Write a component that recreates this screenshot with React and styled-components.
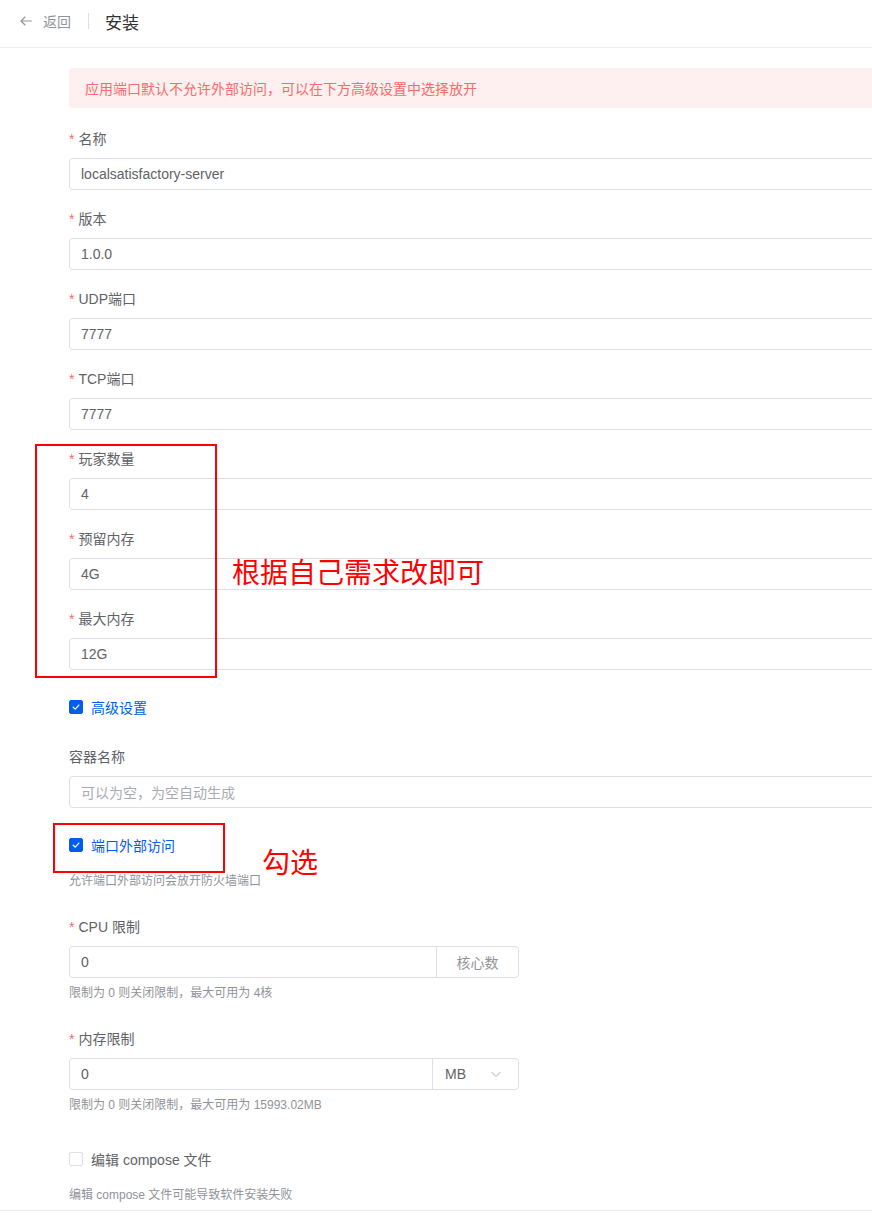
import React from "react";
import styled, { createGlobalStyle } from "styled-components";

const Global = createGlobalStyle`
  html, body { margin: 0; padding: 0; background: #fff; }
  body {
    font-family: "Liberation Sans", "Noto Sans CJK SC", Arial, sans-serif;
    overflow: hidden;
    -webkit-font-smoothing: antialiased;
  }
  * { box-sizing: border-box; }
`;

const Page = styled.div`
  position: relative;
  width: 872px;
  height: 1219px;
  overflow: hidden;
`;

const Header = styled.div`
  height: 48px;
  border-bottom: 1px solid #ebeef5;
  display: flex;
  align-items: center;
  padding-left: 19px;
  padding-bottom: 5px;
`;

const Back = styled.div`
  display: flex;
  align-items: center;
  gap: 10px;
  color: #909399;
  font-size: 14px;
`;

const VDivider = styled.span`
  width: 1px;
  height: 16px;
  background: #dcdfe6;
  margin: 0 16px 0 17px;
`;

const Title = styled.span`
  font-size: 17px;
  color: #303133;
`;

const Form = styled.div`
  margin-left: 69px;
  width: 900px;
  padding-top: 20px;
`;

const Alert = styled.div`
  height: 40px;
  background: #fef0f0;
  color: #f56c6c;
  border-radius: 4px;
  display: flex;
  align-items: center;
  padding-left: 16px;
  font-size: 14px;
  margin-bottom: 20px;
`;

const Item = styled.div`
  margin-bottom: ${(p) => (p.$help ? "20px" : "18px")};
`;

const Label = styled.div`
  font-size: 14px;
  color: #606266;
  line-height: 22px;
  margin-bottom: 8px;
  &::before {
    content: ${(p) => (p.$required ? '"*"' : '""')};
    color: #f56c6c;
    margin-right: ${(p) => (p.$required ? "4px" : "0")};
  }
`;

const Input = styled.div`
  height: 32px;
  border: 1px solid #dcdfe6;
  border-radius: 4px;
  display: flex;
  align-items: center;
  padding-left: 11px;
  font-size: 14px;
  color: ${(p) => (p.$placeholder ? "#a8abb2" : "#606266")};
  background: #fff;
  width: ${(p) => p.$w || "100%"};
`;

const Group = styled.div`
  display: flex;
  width: 450px;
  height: 32px;
  border: 1px solid #dcdfe6;
  border-radius: 4px;
`;

const GroupInput = styled.div`
  flex: 1;
  display: flex;
  align-items: center;
  padding-left: 11px;
  font-size: 14px;
  color: #606266;
`;

const Append = styled.div`
  width: ${(p) => p.$w}px;
  border-left: 1px solid #dcdfe6;
  display: flex;
  align-items: center;
  justify-content: ${(p) => (p.$select ? "space-between" : "center")};
  padding: ${(p) => (p.$select ? "0 16px 0 12px" : "0")};
  font-size: 14px;
  color: ${(p) => (p.$select ? "#606266" : "#909399")};
`;

const CheckRow = styled.div`
  height: 40px;
  padding-bottom: 3px;
  display: flex;
  align-items: center;
  gap: 8px;
  font-size: 14px;
  color: ${(p) => (p.$checked ? "#005eeb" : "#606266")};
`;

const Box = styled.span`
  width: 14px;
  height: 14px;
  border-radius: 2px;
  border: 1px solid ${(p) => (p.$checked ? "#005eeb" : "#dcdfe6")};
  background: ${(p) => (p.$checked ? "#005eeb" : "#fff")};
  display: flex;
  align-items: center;
  justify-content: center;
`;

const Help = styled.div`
  font-size: 12px;
  color: #909399;
  line-height: 30px;
`;

const Footer = styled.div`
  border-top: 1px solid #ebeef5;
  margin-left: -69px;
  width: 872px;
  height: 20px;
`;

const Frame = styled.div`
  position: absolute;
  left: ${(p) => p.$x}px;
  top: ${(p) => p.$y}px;
  width: ${(p) => p.$w}px;
  height: ${(p) => p.$h}px;
  border: 2px solid #ff0000;
  pointer-events: none;
`;

const Note = styled.div`
  position: absolute;
  left: ${(p) => p.$x}px;
  top: ${(p) => p.$y}px;
  font-size: 28px;
  line-height: 32px;
  color: #ff0000;
  font-family: "Noto Sans CJK SC", sans-serif;
  white-space: nowrap;
`;

const Check = () => (
  <svg width="10" height="10" viewBox="0 0 10 10">
    <path d="M2.2 5.2 L4.2 7.1 L7.9 3.1" fill="none" stroke="#fff" strokeWidth="1.3" strokeLinecap="round" strokeLinejoin="round" />
  </svg>
);

const Checkbox = ({ checked, children }) => (
  <CheckRow $checked={checked}>
    <Box $checked={checked}>{checked && <Check />}</Box>
    {children}
  </CheckRow>
);

const fields = [
  ["名称", "localsatisfactory-server"],
  ["版本", "1.0.0"],
  ["UDP端口", "7777"],
  ["TCP端口", "7777"],
  ["玩家数量", "4"],
  ["预留内存", "4G"],
  ["最大内存", "12G"],
];

export default function App() {
  return (
    <Page>
      <Global />
      <Header>
        <Back>
          <svg width="14" height="14" viewBox="0 0 14 14">
            <path d="M12.5 7 H2 M6 3 L2 7 L6 11" fill="none" stroke="#909399" strokeWidth="1.1" strokeLinecap="round" strokeLinejoin="round" />
          </svg>
          <span>返回</span>
        </Back>
        <VDivider />
        <Title>安装</Title>
      </Header>
      <Form>
        <Alert>应用端口默认不允许外部访问，可以在下方高级设置中选择放开</Alert>
        {fields.map(([l, v]) => (
          <Item key={l}>
            <Label $required>{l}</Label>
            <Input>{v}</Input>
          </Item>
        ))}
        <Item>
          <Checkbox checked>高级设置</Checkbox>
        </Item>
        <Item>
          <Label>容器名称</Label>
          <Input $placeholder>可以为空，为空自动生成</Input>
        </Item>
        <Item $help>
          <Checkbox checked>端口外部访问</Checkbox>
          <Help>允许端口外部访问会放开防火墙端口</Help>
        </Item>
        <Item $help>
          <Label $required>CPU 限制</Label>
          <Group>
            <GroupInput>0</GroupInput>
            <Append $w={82}>核心数</Append>
          </Group>
          <Help>限制为 0 则关闭限制，最大可用为 4核</Help>
        </Item>
        <Item $help>
          <Label $required>内存限制</Label>
          <Group>
            <GroupInput>0</GroupInput>
            <Append $w={86} $select>
              <span>MB</span>
              <svg width="12" height="12" viewBox="0 0 12 12">
                <path d="M1.5 4 L6 8.5 L10.5 4" fill="none" stroke="#a8abb2" strokeWidth="1" />
              </svg>
            </Append>
          </Group>
          <Help>限制为 0 则关闭限制，最大可用为 15993.02MB</Help>
        </Item>
        <div>
          <Checkbox>编辑 compose 文件</Checkbox>
          <Help>编辑 compose 文件可能导致软件安装失败</Help>
        </div>
        <Footer />
      </Form>
      <Frame $x={35} $y={444} $w={182} $h={234} />
      <Note $x={232} $y={555}>根据自己需求改即可</Note>
      <Frame $x={53} $y={823} $w={172} $h={50} />
      <Note $x={262} $y={845}>勾选</Note>
    </Page>
  );
}
